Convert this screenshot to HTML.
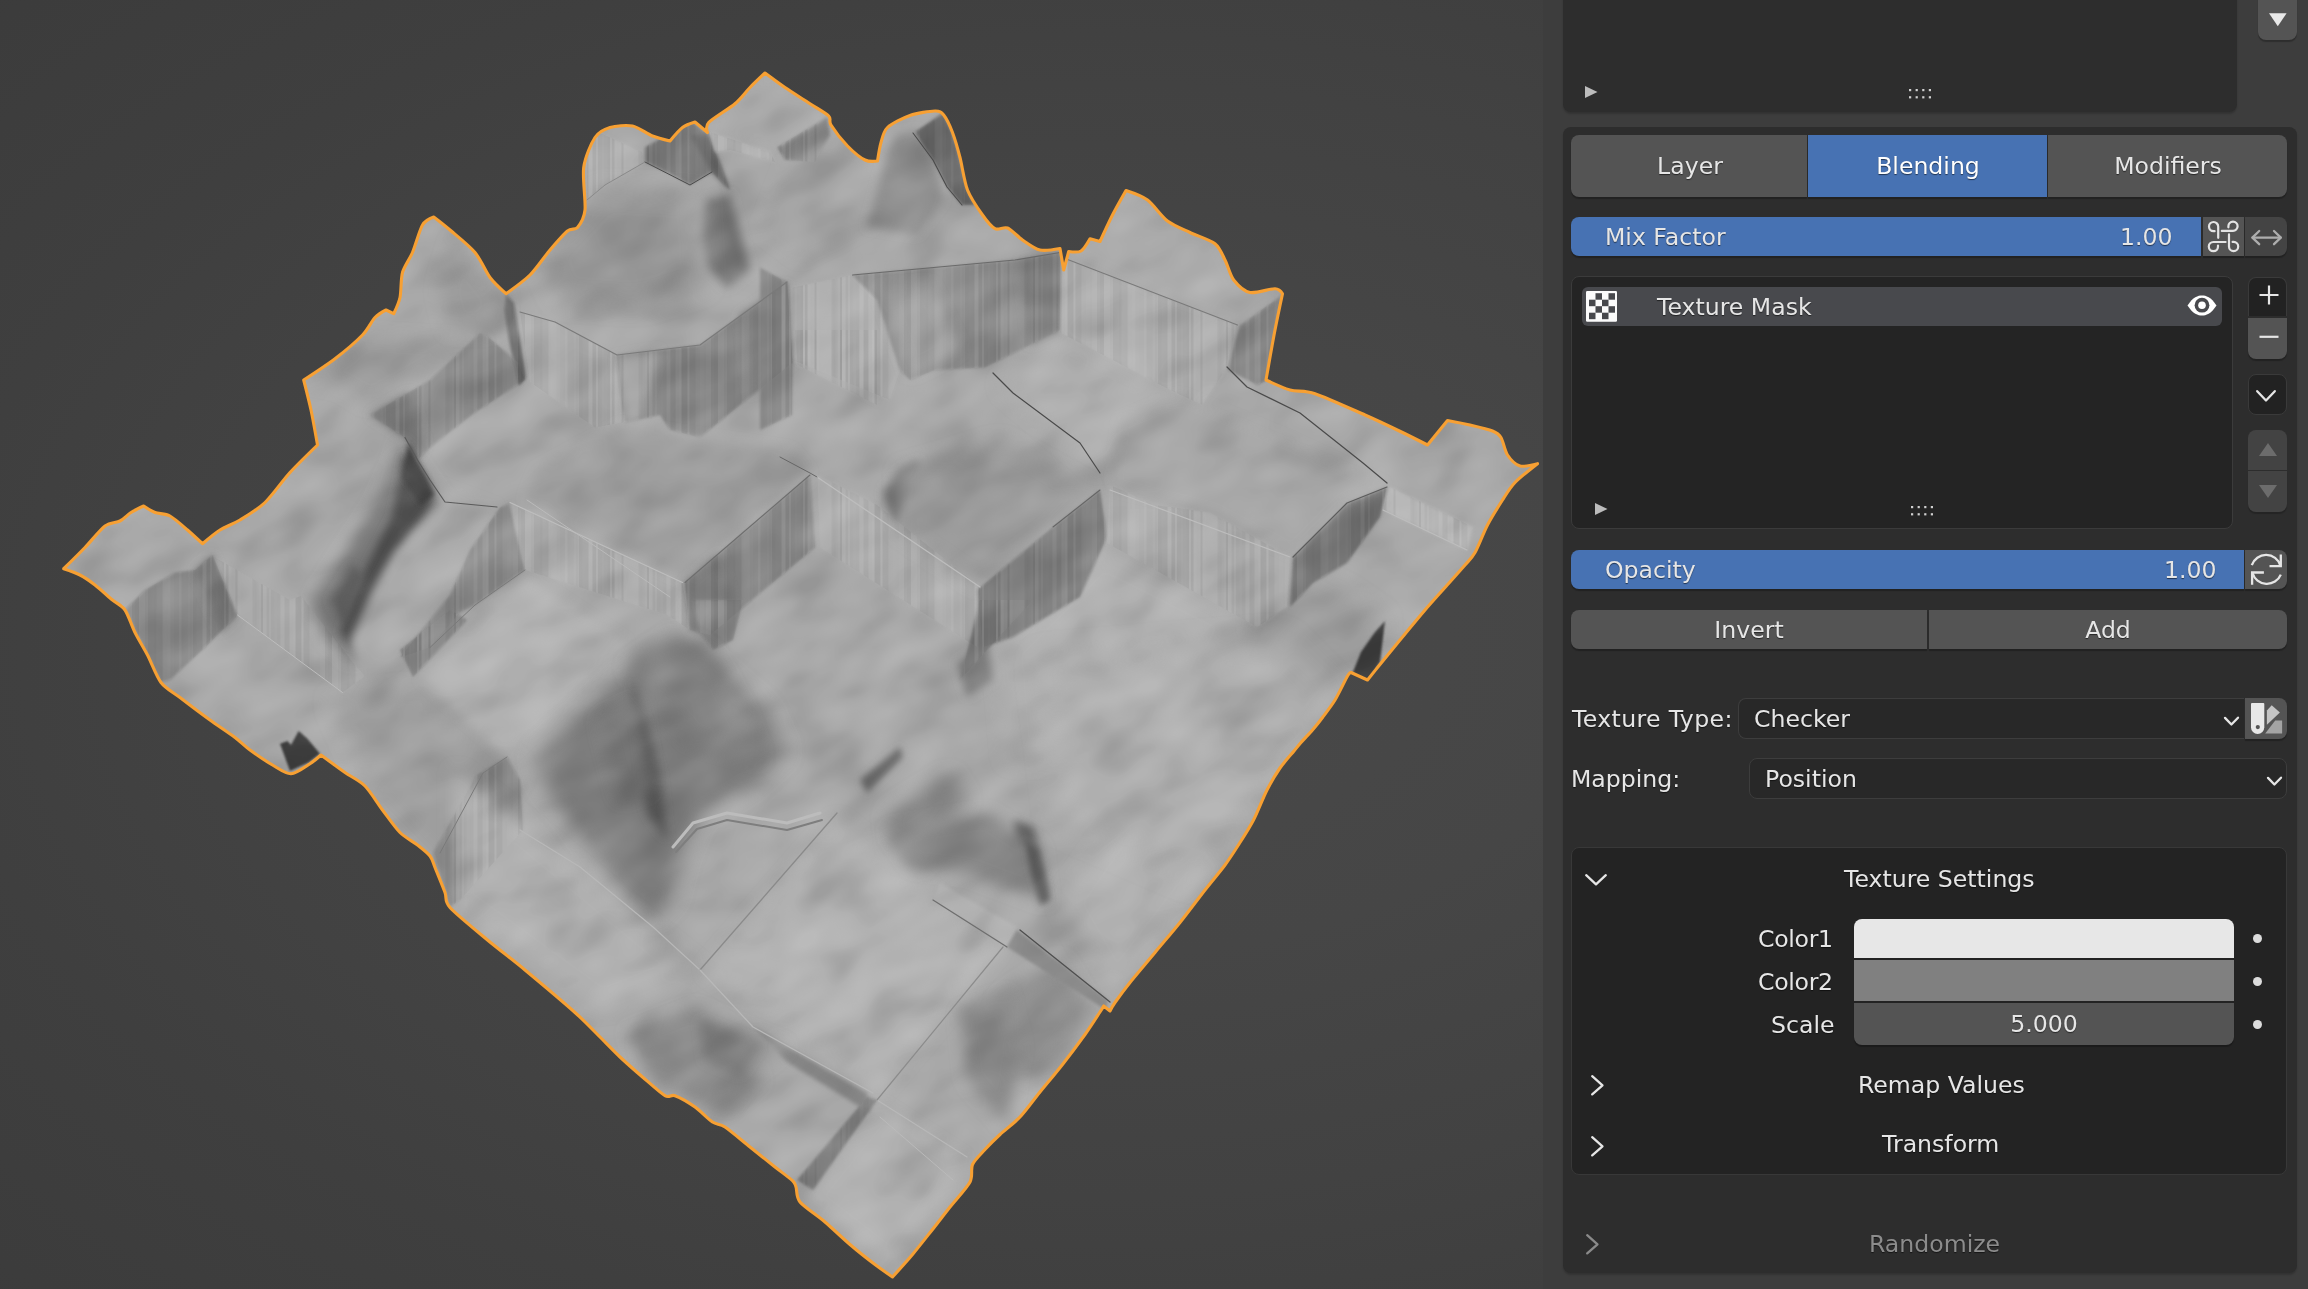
<!DOCTYPE html>
<html lang="en">
<head>
<meta charset="utf-8">
<title>Blender viewport</title>
<style>
html,body{margin:0;padding:0;background:#3d3d3d;}
body{width:2308px;height:1289px;overflow:hidden;position:relative;font-family:"DejaVu Sans","Liberation Sans",sans-serif;font-size:23.6px;color:#e6e6e6;}
#root{position:absolute;left:0;top:0;width:2308px;height:1289px;overflow:hidden;background:#3d3d3d;}
#vp{position:absolute;left:0;top:0;width:1543px;height:1289px;overflow:hidden;background:#3f3f3f;}
#vp svg{position:absolute;left:0;top:0;}
#side{position:absolute;left:1543px;top:0;width:765px;height:1289px;background:#3d3d3d;}
.abs{position:absolute;box-sizing:border-box;}
.t{position:absolute;white-space:nowrap;will-change:transform;line-height:30px;height:30px;text-shadow:0 1px 1px rgba(0,0,0,.55);}
.c{text-align:center;}
.r{text-align:right;}
.box{background:#2d2d2d;border-radius:8px;box-shadow:0 2px 2px rgba(0,0,0,.18);}
.btn{background:#545454;box-shadow:0 2px 1px rgba(0,0,0,.25);}
.blue{background:#4772b3;}
.dark{background:#222222;border:1.5px solid #3a3a3a;}
.field{background:#282828;border:1.5px solid #3d3d3d;border-radius:8px;}
</style>
</head>
<body>
<div id="root">
<div id="vp">
<svg width="1543" height="1289" viewBox="0 0 1543 1289">
<defs>
<radialGradient id="bg" gradientUnits="userSpaceOnUse" cx="0" cy="0" r="1" gradientTransform="translate(1100 640) scale(1730 1050)">
<stop offset="0" stop-color="#494949"/><stop offset="0.30" stop-color="#464646"/><stop offset="0.53" stop-color="#424242"/><stop offset="0.67" stop-color="#3f3f3f"/><stop offset="1" stop-color="#3a3a3a"/></radialGradient>
<pattern id="stripes" width="193" height="8" patternUnits="userSpaceOnUse"><rect x="0.0" y="0" width="3.5" height="8" fill="#000" opacity="0.07"/><rect x="3.5" y="0" width="6.0" height="8" fill="#000" opacity="0.05"/><rect x="9.5" y="0" width="4.0" height="8" fill="#fff" opacity="0.07"/><rect x="13.5" y="0" width="3.5" height="8" fill="#000" opacity="0.06"/><rect x="17.0" y="0" width="2.0" height="8" fill="#fff" opacity="0.03"/><rect x="19.0" y="0" width="4.0" height="8" fill="#000" opacity="0.06"/><rect x="23.0" y="0" width="2.0" height="8" fill="#000" opacity="0.04"/><rect x="25.0" y="0" width="3.5" height="8" fill="#000" opacity="0.05"/><rect x="28.5" y="0" width="2.5" height="8" fill="#000" opacity="0.07"/><rect x="31.0" y="0" width="2.0" height="8" fill="#fff" opacity="0.03"/><rect x="33.0" y="0" width="2.5" height="8" fill="#000" opacity="0.06"/><rect x="35.5" y="0" width="3.0" height="8" fill="#fff" opacity="0.07"/><rect x="38.5" y="0" width="4.0" height="8" fill="#fff" opacity="0.04"/><rect x="42.5" y="0" width="2.0" height="8" fill="#000" opacity="0.05"/><rect x="44.5" y="0" width="3.0" height="8" fill="#fff" opacity="0.06"/><rect x="47.5" y="0" width="6.0" height="8" fill="#fff" opacity="0.04"/><rect x="53.5" y="0" width="6.0" height="8" fill="#fff" opacity="0.04"/><rect x="59.5" y="0" width="2.0" height="8" fill="#000" opacity="0.03"/><rect x="61.5" y="0" width="2.0" height="8" fill="#000" opacity="0.04"/><rect x="63.5" y="0" width="2.0" height="8" fill="#000" opacity="0.02"/><rect x="68.0" y="0" width="2.0" height="8" fill="#000" opacity="0.07"/><rect x="70.0" y="0" width="3.5" height="8" fill="#fff" opacity="0.06"/><rect x="73.5" y="0" width="2.5" height="8" fill="#000" opacity="0.03"/><rect x="76.0" y="0" width="2.0" height="8" fill="#fff" opacity="0.02"/><rect x="78.0" y="0" width="3.5" height="8" fill="#000" opacity="0.03"/><rect x="81.5" y="0" width="2.5" height="8" fill="#000" opacity="0.02"/><rect x="84.0" y="0" width="3.5" height="8" fill="#000" opacity="0.03"/><rect x="87.5" y="0" width="4.0" height="8" fill="#fff" opacity="0.05"/><rect x="91.5" y="0" width="5.0" height="8" fill="#000" opacity="0.04"/><rect x="96.5" y="0" width="3.5" height="8" fill="#fff" opacity="0.05"/><rect x="100.0" y="0" width="2.5" height="8" fill="#fff" opacity="0.08"/><rect x="102.5" y="0" width="6.0" height="8" fill="#000" opacity="0.07"/><rect x="108.5" y="0" width="2.0" height="8" fill="#fff" opacity="0.05"/><rect x="110.5" y="0" width="6.0" height="8" fill="#000" opacity="0.05"/><rect x="118.5" y="0" width="2.5" height="8" fill="#fff" opacity="0.02"/><rect x="121.0" y="0" width="4.0" height="8" fill="#fff" opacity="0.04"/><rect x="125.0" y="0" width="2.0" height="8" fill="#fff" opacity="0.03"/><rect x="127.0" y="0" width="5.0" height="8" fill="#fff" opacity="0.06"/><rect x="132.0" y="0" width="3.0" height="8" fill="#000" opacity="0.03"/><rect x="135.0" y="0" width="4.0" height="8" fill="#000" opacity="0.05"/><rect x="139.0" y="0" width="6.0" height="8" fill="#fff" opacity="0.06"/><rect x="148.0" y="0" width="6.0" height="8" fill="#000" opacity="0.06"/><rect x="154.0" y="0" width="2.5" height="8" fill="#000" opacity="0.07"/><rect x="156.5" y="0" width="2.5" height="8" fill="#000" opacity="0.04"/><rect x="159.0" y="0" width="3.5" height="8" fill="#000" opacity="0.04"/><rect x="162.5" y="0" width="2.0" height="8" fill="#fff" opacity="0.05"/><rect x="164.5" y="0" width="3.0" height="8" fill="#fff" opacity="0.07"/><rect x="167.5" y="0" width="3.0" height="8" fill="#fff" opacity="0.08"/><rect x="170.5" y="0" width="3.5" height="8" fill="#fff" opacity="0.03"/><rect x="179.0" y="0" width="2.5" height="8" fill="#fff" opacity="0.06"/><rect x="181.5" y="0" width="6.0" height="8" fill="#000" opacity="0.02"/><rect x="190.0" y="0" width="2.5" height="8" fill="#000" opacity="0.02"/><rect x="192.5" y="0" width="3.5" height="8" fill="#fff" opacity="0.02"/></pattern>
<filter id="sb" x="-5%" y="-5%" width="110%" height="110%"><feGaussianBlur stdDeviation="0.7 0"/></filter>
<filter id="nzl" x="0" y="0" width="100%" height="100%"><feTurbulence type="fractalNoise" baseFrequency="0.016 0.028" numOctaves="2" seed="5"/><feColorMatrix type="matrix" values="0 0 0 0 1  0 0 0 0 1  0 0 0 0 1  3.0 0 0 0 -1.45"/></filter>
<filter id="nzd" x="0" y="0" width="100%" height="100%"><feTurbulence type="fractalNoise" baseFrequency="0.016 0.028" numOctaves="2" seed="5"/><feColorMatrix type="matrix" values="0 0 0 0 0  0 0 0 0 0  0 0 0 0 0  -3.0 0 0 0 1.45"/></filter>
<clipPath id="tc"><path d="M63.7 568.7 C63.7 568.7 79.1 553.6 85.0 547.5 C90.9 541.4 100.0 529.8 105.0 526.0 C110.0 522.2 116.3 522.9 120.0 521.0 C123.7 519.1 127.6 514.6 131.0 512.5 C134.4 510.4 143.7 506.0 143.7 506.0 C143.7 506.0 151.2 511.1 155.0 512.5 C158.8 513.9 165.4 513.5 170.0 516.0 C174.6 518.5 182.9 526.0 187.5 530.0 C192.1 534.0 202.5 543.7 202.5 543.7 C202.5 543.7 214.6 533.4 220.0 530.0 C225.4 526.6 233.6 523.9 240.0 520.0 C246.4 516.1 257.9 509.3 265.0 502.5 C272.1 495.7 282.5 480.7 290.0 472.5 C297.5 464.3 317.5 445.0 317.5 445.0 C317.5 445.0 313.0 419.3 311.0 410.0 C309.0 400.7 303.7 380.0 303.7 380.0 C303.7 380.0 326.6 365.1 335.0 358.7 C343.4 352.3 356.8 340.9 362.5 335.0 C368.2 329.1 371.6 321.1 375.0 317.5 C378.4 313.9 386.0 310.0 386.0 310.0 C386.0 310.0 393.7 313.7 393.7 313.7 C393.7 313.7 398.7 303.4 400.0 297.5 C401.3 291.6 400.7 278.9 402.5 272.5 C404.3 266.1 409.6 259.3 412.5 252.5 C415.4 245.7 419.5 230.1 422.5 225.0 C425.5 219.9 433.7 217.0 433.7 217.0 C433.7 217.0 444.1 224.9 450.0 230.0 C455.9 235.1 469.3 245.7 475.0 252.5 C480.7 259.3 485.6 271.6 490.0 277.5 C494.4 283.4 506.0 293.7 506.0 293.7 C506.0 293.7 523.7 281.2 530.0 275.0 C536.3 268.8 544.6 256.3 550.0 250.0 C555.4 243.7 563.6 234.2 567.5 231.0 C571.4 227.8 575.0 230.5 577.5 227.5 C580.0 224.5 584.1 218.6 585.0 210.0 C585.9 201.4 582.3 177.9 583.7 167.5 C585.1 157.1 591.2 143.2 595.0 137.5 C598.8 131.8 604.6 129.1 610.0 127.5 C615.4 125.9 626.4 124.8 632.5 126.0 C638.6 127.2 647.1 133.9 652.5 136.0 C657.9 138.1 670.0 141.0 670.0 141.0 C670.0 141.0 678.9 130.2 682.5 127.5 C686.1 124.8 695.0 122.0 695.0 122.0 C695.0 122.0 707.5 132.5 707.5 132.5 C707.5 132.5 704.8 126.6 708.7 122.5 C712.6 118.4 729.1 108.7 735.0 103.7 C740.9 98.7 745.7 91.9 750.0 87.5 C754.3 83.1 765.0 73.0 765.0 73.0 C765.0 73.0 778.6 83.1 785.0 87.5 C791.4 91.9 803.8 99.6 810.0 103.7 C816.2 107.8 825.7 113.0 828.7 116.0 C831.7 119.0 828.3 120.7 831.0 125.0 C833.7 129.3 842.6 141.0 847.5 146.0 C852.4 151.0 860.7 157.9 865.0 160.0 C869.3 162.1 877.5 161.0 877.5 161.0 C877.5 161.0 879.6 147.3 881.0 142.5 C882.4 137.7 883.4 131.4 887.5 127.5 C891.6 123.6 903.2 117.9 910.0 115.5 C916.8 113.1 930.2 111.1 935.0 111.0 C939.8 110.9 941.2 111.9 943.7 115.0 C946.2 118.1 950.2 126.4 952.5 132.5 C954.8 138.6 957.9 149.3 960.0 157.5 C962.1 165.7 964.3 181.8 967.5 190.0 C970.7 198.2 978.6 209.5 982.5 215.0 C986.4 220.5 991.4 226.8 995.0 228.7 C998.6 230.6 1003.6 226.4 1007.5 228.0 C1011.4 229.6 1017.9 236.9 1022.5 240.0 C1027.1 243.1 1034.6 248.8 1040.0 250.0 C1045.4 251.2 1060.0 248.5 1060.0 248.5 C1060.0 248.5 1063.7 270.0 1063.7 270.0 C1063.7 270.0 1068.7 251.5 1068.7 251.5 C1068.7 251.5 1078.0 252.8 1081.0 251.0 C1084.0 249.2 1090.0 238.7 1090.0 238.7 C1090.0 238.7 1100.0 241.5 1100.0 241.5 C1100.0 241.5 1108.8 222.3 1112.5 215.0 C1116.2 207.7 1126.0 190.5 1126.0 190.5 C1126.0 190.5 1141.6 195.6 1147.5 200.0 C1153.4 204.4 1161.4 216.4 1167.5 221.0 C1173.6 225.6 1183.2 229.3 1190.0 232.5 C1196.8 235.7 1210.0 239.8 1215.0 243.7 C1220.0 247.6 1222.3 254.8 1225.0 260.0 C1227.7 265.2 1230.1 275.4 1233.7 280.0 C1237.3 284.6 1244.1 291.3 1250.0 292.5 C1255.9 293.7 1270.4 288.5 1275.0 288.7 C1279.6 288.9 1282.5 293.7 1282.5 293.7 C1282.5 293.7 1277.4 317.7 1275.0 330.0 C1272.6 342.3 1266.0 380.0 1266.0 380.0 C1266.0 380.0 1283.0 388.0 1290.0 390.0 C1297.0 392.0 1304.3 390.1 1315.0 393.7 C1325.7 397.3 1352.5 409.5 1365.0 415.0 C1377.5 420.5 1393.6 428.2 1402.5 432.5 C1411.4 436.8 1427.5 445.0 1427.5 445.0 C1427.5 445.0 1447.5 420.5 1447.5 420.5 C1447.5 420.5 1463.6 423.5 1470.0 425.0 C1476.4 426.5 1488.1 429.2 1492.5 431.0 C1496.9 432.8 1498.9 434.1 1501.0 437.5 C1503.1 440.9 1504.8 450.9 1507.5 455.0 C1510.2 459.1 1515.7 464.8 1520.0 466.0 C1524.3 467.2 1537.5 463.7 1537.5 463.7 C1537.5 463.7 1520.0 477.3 1515.0 482.5 C1510.0 487.7 1506.4 493.9 1502.5 500.0 C1498.6 506.1 1491.4 517.5 1487.5 525.0 C1483.6 532.5 1478.2 546.8 1475.0 552.5 C1471.8 558.2 1469.3 560.0 1465.0 565.0 C1460.7 570.0 1450.7 581.1 1445.0 587.5 C1439.3 593.9 1431.4 602.5 1425.0 610.0 C1418.6 617.5 1406.8 631.8 1400.0 640.0 C1393.2 648.2 1382.1 661.8 1377.5 667.5 C1372.9 673.2 1367.5 680.0 1367.5 680.0 C1367.5 680.0 1351.0 672.5 1351.0 672.5 C1351.0 672.5 1349.8 672.1 1347.5 676.0 C1345.2 679.9 1338.6 694.1 1335.0 700.0 C1331.4 705.9 1325.7 713.2 1322.5 717.5 C1319.3 721.8 1315.6 726.4 1312.5 730.0 C1309.4 733.6 1303.6 739.5 1301.0 742.5 C1298.4 745.5 1297.0 747.4 1294.0 751.0 C1291.0 754.6 1283.9 762.4 1280.0 768.0 C1276.1 773.6 1270.8 782.6 1267.0 790.0 C1263.2 797.4 1257.4 812.5 1253.5 820.0 C1249.6 827.5 1244.1 836.1 1240.0 842.5 C1235.9 848.9 1230.0 858.2 1225.0 865.0 C1220.0 871.8 1211.4 881.8 1205.0 890.0 C1198.6 898.2 1187.1 913.6 1180.0 922.5 C1172.9 931.4 1162.1 943.9 1155.0 952.5 C1147.9 961.1 1135.7 975.4 1130.0 982.5 C1124.3 989.6 1117.9 998.4 1115.0 1002.5 C1112.1 1006.6 1110.0 1011.0 1110.0 1011.0 C1110.0 1011.0 1103.7 1006.0 1103.7 1006.0 C1103.7 1006.0 1102.7 1007.9 1100.0 1012.0 C1097.3 1016.1 1090.4 1027.0 1085.0 1034.5 C1079.6 1042.0 1068.9 1056.3 1062.5 1064.5 C1056.1 1072.7 1046.1 1084.5 1040.0 1092.0 C1033.9 1099.5 1025.7 1110.9 1020.0 1117.0 C1014.3 1123.1 1005.0 1129.9 1000.0 1134.5 C995.0 1139.1 988.9 1145.2 985.0 1149.5 C981.1 1153.8 974.6 1159.9 972.5 1164.5 C970.4 1169.1 973.2 1175.9 970.0 1182.0 C966.8 1188.1 955.4 1200.2 950.0 1207.0 C944.6 1213.8 937.9 1222.7 932.5 1229.5 C927.1 1236.3 918.2 1247.7 912.5 1254.5 C906.8 1261.3 892.5 1277.0 892.5 1277.0 C892.5 1277.0 881.1 1269.1 875.0 1264.5 C868.9 1259.9 857.1 1250.6 850.0 1244.5 C842.9 1238.4 832.1 1228.1 825.0 1222.0 C817.9 1215.9 804.1 1207.0 800.0 1202.0 C795.9 1197.0 797.1 1190.0 796.0 1187.0 C794.9 1184.0 795.5 1183.6 792.5 1180.7 C789.5 1177.8 781.1 1171.8 775.0 1167.0 C768.9 1162.2 757.1 1152.7 750.0 1147.0 C742.9 1141.3 730.4 1130.6 725.0 1127.0 C719.6 1123.4 716.8 1124.9 712.5 1122.0 C708.2 1119.1 700.4 1110.8 695.0 1107.0 C689.6 1103.2 679.3 1097.3 675.0 1095.7 C670.7 1094.1 669.6 1098.4 665.0 1095.7 C660.4 1093.0 648.9 1082.5 642.5 1077.0 C636.1 1071.5 626.1 1062.7 620.0 1057.0 C613.9 1051.3 606.4 1043.4 600.0 1037.0 C593.6 1030.6 585.7 1022.1 575.0 1012.5 C564.3 1002.9 537.5 980.4 525.0 970.0 C512.5 959.6 498.2 948.9 487.5 940.0 C476.8 931.1 456.1 914.3 450.0 907.5 C443.9 900.7 447.1 898.2 445.0 892.5 C442.9 886.8 437.1 872.7 435.0 867.5 C432.9 862.3 432.5 859.2 430.0 856.0 C427.5 852.8 421.8 848.4 417.5 845.0 C413.2 841.6 405.0 837.5 400.0 832.5 C395.0 827.5 387.5 816.6 382.5 810.0 C377.5 803.4 370.4 791.4 365.0 786.0 C359.6 780.6 351.3 776.9 345.0 772.5 C338.7 768.1 321.0 755.0 321.0 755.0 C321.0 755.0 314.3 761.0 310.0 763.7 C305.7 766.4 296.4 773.5 291.0 773.7 C285.6 773.9 278.4 768.4 272.5 765.0 C266.6 761.6 255.4 753.9 250.0 750.0 C244.6 746.1 240.7 741.8 235.0 737.5 C229.3 733.2 217.9 725.7 210.0 720.0 C202.1 714.3 187.0 702.9 180.0 697.5 C173.0 692.1 165.6 688.6 161.0 682.5 C156.4 676.4 151.2 662.1 147.5 655.0 C143.8 647.9 138.2 638.9 135.0 632.5 C131.8 626.1 128.2 614.6 125.0 610.0 C121.8 605.4 116.8 603.6 112.5 600.0 C108.2 596.4 99.6 588.6 95.0 585.0 C90.4 581.4 84.5 577.3 80.0 575.0 C75.5 572.7 63.7 568.7 63.7 568.7 Z"/></clipPath>
<filter id="b1" x="-50%" y="-50%" width="200%" height="200%"><feGaussianBlur stdDeviation="1"/></filter>
<filter id="b1_5" x="-50%" y="-50%" width="200%" height="200%"><feGaussianBlur stdDeviation="1.5"/></filter>
<filter id="b2" x="-50%" y="-50%" width="200%" height="200%"><feGaussianBlur stdDeviation="2"/></filter>
<filter id="b2_5" x="-50%" y="-50%" width="200%" height="200%"><feGaussianBlur stdDeviation="2.5"/></filter>
<filter id="b3" x="-50%" y="-50%" width="200%" height="200%"><feGaussianBlur stdDeviation="3"/></filter>
<filter id="b4" x="-50%" y="-50%" width="200%" height="200%"><feGaussianBlur stdDeviation="4"/></filter>
<filter id="b5" x="-50%" y="-50%" width="200%" height="200%"><feGaussianBlur stdDeviation="5"/></filter>
<filter id="b6" x="-50%" y="-50%" width="200%" height="200%"><feGaussianBlur stdDeviation="6"/></filter>
<filter id="b7" x="-50%" y="-50%" width="200%" height="200%"><feGaussianBlur stdDeviation="7"/></filter>
<filter id="b8" x="-50%" y="-50%" width="200%" height="200%"><feGaussianBlur stdDeviation="8"/></filter>
<filter id="b9" x="-50%" y="-50%" width="200%" height="200%"><feGaussianBlur stdDeviation="9"/></filter>
<filter id="b10" x="-50%" y="-50%" width="200%" height="200%"><feGaussianBlur stdDeviation="10"/></filter>
<filter id="b12" x="-50%" y="-50%" width="200%" height="200%"><feGaussianBlur stdDeviation="12"/></filter>
</defs>
<rect x="0" y="0" width="2308" height="1289" fill="url(#bg)"/>
<path d="M63.7 568.7 C63.7 568.7 79.1 553.6 85.0 547.5 C90.9 541.4 100.0 529.8 105.0 526.0 C110.0 522.2 116.3 522.9 120.0 521.0 C123.7 519.1 127.6 514.6 131.0 512.5 C134.4 510.4 143.7 506.0 143.7 506.0 C143.7 506.0 151.2 511.1 155.0 512.5 C158.8 513.9 165.4 513.5 170.0 516.0 C174.6 518.5 182.9 526.0 187.5 530.0 C192.1 534.0 202.5 543.7 202.5 543.7 C202.5 543.7 214.6 533.4 220.0 530.0 C225.4 526.6 233.6 523.9 240.0 520.0 C246.4 516.1 257.9 509.3 265.0 502.5 C272.1 495.7 282.5 480.7 290.0 472.5 C297.5 464.3 317.5 445.0 317.5 445.0 C317.5 445.0 313.0 419.3 311.0 410.0 C309.0 400.7 303.7 380.0 303.7 380.0 C303.7 380.0 326.6 365.1 335.0 358.7 C343.4 352.3 356.8 340.9 362.5 335.0 C368.2 329.1 371.6 321.1 375.0 317.5 C378.4 313.9 386.0 310.0 386.0 310.0 C386.0 310.0 393.7 313.7 393.7 313.7 C393.7 313.7 398.7 303.4 400.0 297.5 C401.3 291.6 400.7 278.9 402.5 272.5 C404.3 266.1 409.6 259.3 412.5 252.5 C415.4 245.7 419.5 230.1 422.5 225.0 C425.5 219.9 433.7 217.0 433.7 217.0 C433.7 217.0 444.1 224.9 450.0 230.0 C455.9 235.1 469.3 245.7 475.0 252.5 C480.7 259.3 485.6 271.6 490.0 277.5 C494.4 283.4 506.0 293.7 506.0 293.7 C506.0 293.7 523.7 281.2 530.0 275.0 C536.3 268.8 544.6 256.3 550.0 250.0 C555.4 243.7 563.6 234.2 567.5 231.0 C571.4 227.8 575.0 230.5 577.5 227.5 C580.0 224.5 584.1 218.6 585.0 210.0 C585.9 201.4 582.3 177.9 583.7 167.5 C585.1 157.1 591.2 143.2 595.0 137.5 C598.8 131.8 604.6 129.1 610.0 127.5 C615.4 125.9 626.4 124.8 632.5 126.0 C638.6 127.2 647.1 133.9 652.5 136.0 C657.9 138.1 670.0 141.0 670.0 141.0 C670.0 141.0 678.9 130.2 682.5 127.5 C686.1 124.8 695.0 122.0 695.0 122.0 C695.0 122.0 707.5 132.5 707.5 132.5 C707.5 132.5 704.8 126.6 708.7 122.5 C712.6 118.4 729.1 108.7 735.0 103.7 C740.9 98.7 745.7 91.9 750.0 87.5 C754.3 83.1 765.0 73.0 765.0 73.0 C765.0 73.0 778.6 83.1 785.0 87.5 C791.4 91.9 803.8 99.6 810.0 103.7 C816.2 107.8 825.7 113.0 828.7 116.0 C831.7 119.0 828.3 120.7 831.0 125.0 C833.7 129.3 842.6 141.0 847.5 146.0 C852.4 151.0 860.7 157.9 865.0 160.0 C869.3 162.1 877.5 161.0 877.5 161.0 C877.5 161.0 879.6 147.3 881.0 142.5 C882.4 137.7 883.4 131.4 887.5 127.5 C891.6 123.6 903.2 117.9 910.0 115.5 C916.8 113.1 930.2 111.1 935.0 111.0 C939.8 110.9 941.2 111.9 943.7 115.0 C946.2 118.1 950.2 126.4 952.5 132.5 C954.8 138.6 957.9 149.3 960.0 157.5 C962.1 165.7 964.3 181.8 967.5 190.0 C970.7 198.2 978.6 209.5 982.5 215.0 C986.4 220.5 991.4 226.8 995.0 228.7 C998.6 230.6 1003.6 226.4 1007.5 228.0 C1011.4 229.6 1017.9 236.9 1022.5 240.0 C1027.1 243.1 1034.6 248.8 1040.0 250.0 C1045.4 251.2 1060.0 248.5 1060.0 248.5 C1060.0 248.5 1063.7 270.0 1063.7 270.0 C1063.7 270.0 1068.7 251.5 1068.7 251.5 C1068.7 251.5 1078.0 252.8 1081.0 251.0 C1084.0 249.2 1090.0 238.7 1090.0 238.7 C1090.0 238.7 1100.0 241.5 1100.0 241.5 C1100.0 241.5 1108.8 222.3 1112.5 215.0 C1116.2 207.7 1126.0 190.5 1126.0 190.5 C1126.0 190.5 1141.6 195.6 1147.5 200.0 C1153.4 204.4 1161.4 216.4 1167.5 221.0 C1173.6 225.6 1183.2 229.3 1190.0 232.5 C1196.8 235.7 1210.0 239.8 1215.0 243.7 C1220.0 247.6 1222.3 254.8 1225.0 260.0 C1227.7 265.2 1230.1 275.4 1233.7 280.0 C1237.3 284.6 1244.1 291.3 1250.0 292.5 C1255.9 293.7 1270.4 288.5 1275.0 288.7 C1279.6 288.9 1282.5 293.7 1282.5 293.7 C1282.5 293.7 1277.4 317.7 1275.0 330.0 C1272.6 342.3 1266.0 380.0 1266.0 380.0 C1266.0 380.0 1283.0 388.0 1290.0 390.0 C1297.0 392.0 1304.3 390.1 1315.0 393.7 C1325.7 397.3 1352.5 409.5 1365.0 415.0 C1377.5 420.5 1393.6 428.2 1402.5 432.5 C1411.4 436.8 1427.5 445.0 1427.5 445.0 C1427.5 445.0 1447.5 420.5 1447.5 420.5 C1447.5 420.5 1463.6 423.5 1470.0 425.0 C1476.4 426.5 1488.1 429.2 1492.5 431.0 C1496.9 432.8 1498.9 434.1 1501.0 437.5 C1503.1 440.9 1504.8 450.9 1507.5 455.0 C1510.2 459.1 1515.7 464.8 1520.0 466.0 C1524.3 467.2 1537.5 463.7 1537.5 463.7 C1537.5 463.7 1520.0 477.3 1515.0 482.5 C1510.0 487.7 1506.4 493.9 1502.5 500.0 C1498.6 506.1 1491.4 517.5 1487.5 525.0 C1483.6 532.5 1478.2 546.8 1475.0 552.5 C1471.8 558.2 1469.3 560.0 1465.0 565.0 C1460.7 570.0 1450.7 581.1 1445.0 587.5 C1439.3 593.9 1431.4 602.5 1425.0 610.0 C1418.6 617.5 1406.8 631.8 1400.0 640.0 C1393.2 648.2 1382.1 661.8 1377.5 667.5 C1372.9 673.2 1367.5 680.0 1367.5 680.0 C1367.5 680.0 1351.0 672.5 1351.0 672.5 C1351.0 672.5 1349.8 672.1 1347.5 676.0 C1345.2 679.9 1338.6 694.1 1335.0 700.0 C1331.4 705.9 1325.7 713.2 1322.5 717.5 C1319.3 721.8 1315.6 726.4 1312.5 730.0 C1309.4 733.6 1303.6 739.5 1301.0 742.5 C1298.4 745.5 1297.0 747.4 1294.0 751.0 C1291.0 754.6 1283.9 762.4 1280.0 768.0 C1276.1 773.6 1270.8 782.6 1267.0 790.0 C1263.2 797.4 1257.4 812.5 1253.5 820.0 C1249.6 827.5 1244.1 836.1 1240.0 842.5 C1235.9 848.9 1230.0 858.2 1225.0 865.0 C1220.0 871.8 1211.4 881.8 1205.0 890.0 C1198.6 898.2 1187.1 913.6 1180.0 922.5 C1172.9 931.4 1162.1 943.9 1155.0 952.5 C1147.9 961.1 1135.7 975.4 1130.0 982.5 C1124.3 989.6 1117.9 998.4 1115.0 1002.5 C1112.1 1006.6 1110.0 1011.0 1110.0 1011.0 C1110.0 1011.0 1103.7 1006.0 1103.7 1006.0 C1103.7 1006.0 1102.7 1007.9 1100.0 1012.0 C1097.3 1016.1 1090.4 1027.0 1085.0 1034.5 C1079.6 1042.0 1068.9 1056.3 1062.5 1064.5 C1056.1 1072.7 1046.1 1084.5 1040.0 1092.0 C1033.9 1099.5 1025.7 1110.9 1020.0 1117.0 C1014.3 1123.1 1005.0 1129.9 1000.0 1134.5 C995.0 1139.1 988.9 1145.2 985.0 1149.5 C981.1 1153.8 974.6 1159.9 972.5 1164.5 C970.4 1169.1 973.2 1175.9 970.0 1182.0 C966.8 1188.1 955.4 1200.2 950.0 1207.0 C944.6 1213.8 937.9 1222.7 932.5 1229.5 C927.1 1236.3 918.2 1247.7 912.5 1254.5 C906.8 1261.3 892.5 1277.0 892.5 1277.0 C892.5 1277.0 881.1 1269.1 875.0 1264.5 C868.9 1259.9 857.1 1250.6 850.0 1244.5 C842.9 1238.4 832.1 1228.1 825.0 1222.0 C817.9 1215.9 804.1 1207.0 800.0 1202.0 C795.9 1197.0 797.1 1190.0 796.0 1187.0 C794.9 1184.0 795.5 1183.6 792.5 1180.7 C789.5 1177.8 781.1 1171.8 775.0 1167.0 C768.9 1162.2 757.1 1152.7 750.0 1147.0 C742.9 1141.3 730.4 1130.6 725.0 1127.0 C719.6 1123.4 716.8 1124.9 712.5 1122.0 C708.2 1119.1 700.4 1110.8 695.0 1107.0 C689.6 1103.2 679.3 1097.3 675.0 1095.7 C670.7 1094.1 669.6 1098.4 665.0 1095.7 C660.4 1093.0 648.9 1082.5 642.5 1077.0 C636.1 1071.5 626.1 1062.7 620.0 1057.0 C613.9 1051.3 606.4 1043.4 600.0 1037.0 C593.6 1030.6 585.7 1022.1 575.0 1012.5 C564.3 1002.9 537.5 980.4 525.0 970.0 C512.5 959.6 498.2 948.9 487.5 940.0 C476.8 931.1 456.1 914.3 450.0 907.5 C443.9 900.7 447.1 898.2 445.0 892.5 C442.9 886.8 437.1 872.7 435.0 867.5 C432.9 862.3 432.5 859.2 430.0 856.0 C427.5 852.8 421.8 848.4 417.5 845.0 C413.2 841.6 405.0 837.5 400.0 832.5 C395.0 827.5 387.5 816.6 382.5 810.0 C377.5 803.4 370.4 791.4 365.0 786.0 C359.6 780.6 351.3 776.9 345.0 772.5 C338.7 768.1 321.0 755.0 321.0 755.0 C321.0 755.0 314.3 761.0 310.0 763.7 C305.7 766.4 296.4 773.5 291.0 773.7 C285.6 773.9 278.4 768.4 272.5 765.0 C266.6 761.6 255.4 753.9 250.0 750.0 C244.6 746.1 240.7 741.8 235.0 737.5 C229.3 733.2 217.9 725.7 210.0 720.0 C202.1 714.3 187.0 702.9 180.0 697.5 C173.0 692.1 165.6 688.6 161.0 682.5 C156.4 676.4 151.2 662.1 147.5 655.0 C143.8 647.9 138.2 638.9 135.0 632.5 C131.8 626.1 128.2 614.6 125.0 610.0 C121.8 605.4 116.8 603.6 112.5 600.0 C108.2 596.4 99.6 588.6 95.0 585.0 C90.4 581.4 84.5 577.3 80.0 575.0 C75.5 572.7 63.7 568.7 63.7 568.7 Z" fill="#a8a8a8"/>
<g clip-path="url(#tc)">
<path d="M1282.0 580.0 L1300.0 570.0 L1350.0 595.0 L1385.0 620.0 L1375.0 660.0 L1350.0 672.0 L1300.0 762.0 L1175.0 762.0 L1220.0 665.0 L1250.0 615.0 Z" fill="#9d9d9d" filter="url(#b9)"/>
<path d="M1000.0 645.0 L1100.0 545.0 L1245.0 618.0 L1175.0 755.0 L1010.0 760.0 Z" fill="#b0b0b0" filter="url(#b9)"/>
<path d="M1060.0 902.0 L1135.0 795.0 L1235.0 842.0 L1115.0 998.0 Z" fill="#b0b0b0" filter="url(#b8)"/>
<path d="M465.0 290.0 L505.0 295.0 L510.0 330.0 L480.0 340.0 Z" fill="#909090" filter="url(#b6)"/>
<path d="M305.0 380.0 L362.0 335.0 L440.0 340.0 L485.0 342.0 L370.0 405.0 L340.0 387.0 Z" fill="#9c9c9c" filter="url(#b7)"/>
<path d="M330.0 700.0 L420.0 690.0 L520.0 770.0 L450.0 870.0 L370.0 790.0 Z" fill="#9e9e9e" filter="url(#b9)"/>
<path d="M1130.0 430.0 L1200.0 412.0 L1380.0 488.0 L1300.0 500.0 Z" fill="#b3b3b3" filter="url(#b5)"/>
<path d="M1125.0 452.0 L1300.0 520.0 L1290.0 545.0 L1115.0 480.0 Z" fill="#999999" filter="url(#b6)"/>
<path d="M1000.0 385.0 L1060.0 340.0 L1160.0 392.0 L1100.0 470.0 Z" fill="#aeaeae" filter="url(#b8)"/>
<path d="M370.0 415.0 L430.0 380.0 L480.0 333.0 L487.0 336.0 L517.5 362.0 L525.0 380.0 L475.0 412.5 L430.0 447.5 L417.5 460.0 L405.0 437.5 Z" fill="#8a8a8a" filter="url(#b1_5)"/>
<path d="M370.0 415.0 L410.0 392.0 L425.0 445.0 L417.5 460.0 L405.0 437.5 Z" fill="#7c7c7c" filter="url(#b4)"/>
<path d="M506.0 294.0 L514.0 303.0 L526.0 378.0 L519.0 386.0 L509.0 340.0 L504.0 310.0 Z" fill="#6c6c6c" filter="url(#b1_5)"/>
<path d="M455.0 240.0 L490.0 280.0 L505.0 300.0 L490.0 330.0 L450.0 330.0 L440.0 290.0 Z" fill="#9b9b9b" filter="url(#b8)"/>
<path d="M587.0 140.0 L600.0 133.0 L642.0 152.0 L645.0 162.0 L605.0 185.0 L587.0 200.0 Z" fill="#aeaeae" filter="url(#b1_5)"/>
<path d="M645.0 147.0 L692.0 122.0 L708.0 134.0 L730.0 190.0 L712.0 172.0 L690.0 185.0 L672.0 175.0 L645.0 162.0 Z" fill="#7a7a7a" filter="url(#b1_5)"/>
<path d="M690.0 135.0 L708.0 134.0 L730.0 190.0 L712.0 172.0 Z" fill="#666666" filter="url(#b2_5)"/>
<path d="M705.0 200.0 L730.0 195.0 L750.0 270.0 L727.0 288.0 L705.0 265.0 L700.0 230.0 Z" fill="#707070" filter="url(#b5)"/>
<path d="M600.0 190.0 L700.0 195.0 L705.0 285.0 L640.0 305.0 L560.0 300.0 L540.0 255.0 Z" fill="#949494" filter="url(#b10)"/>
<path d="M520.0 312.0 L555.0 322.0 L617.0 355.0 L625.0 422.0 L595.0 427.5 L530.0 382.0 Z" fill="#aaaaaa" filter="url(#b1_5)"/>
<path d="M615.0 355.0 L700.0 345.0 L787.0 282.0 L792.5 362.5 L700.0 437.5 L670.0 430.0 L660.0 415.0 L625.0 422.5 Z" fill="#868686" filter="url(#b1_5)"/>
<path d="M617.0 357.0 L660.0 350.0 L640.0 420.0 L625.0 422.0 Z" fill="#a0a0a0" filter="url(#b4)"/>
<path d="M740.0 315.0 L787.0 284.0 L792.0 362.0 L750.0 395.0 Z" fill="#7c7c7c" filter="url(#b4)"/>
<path d="M710.0 132.0 L770.0 152.0 L775.0 162.0 L730.0 150.0 L715.0 152.0 Z" fill="#b0b0b0" filter="url(#b1_5)"/>
<path d="M777.0 147.0 L827.0 117.0 L830.0 135.0 L815.0 162.0 L785.0 160.0 Z" fill="#7a7a7a" filter="url(#b1_5)"/>
<path d="M735.0 100.0 L765.0 78.0 L826.0 116.0 L777.0 147.0 L712.0 128.0 Z" fill="#a9a9a9" filter="url(#b3)"/>
<path d="M785.0 165.0 L830.0 140.0 L865.0 162.0 L880.0 165.0 L870.0 225.0 L800.0 260.0 L760.0 230.0 Z" fill="#a5a5a5" filter="url(#b6)"/>
<path d="M867.0 227.0 L885.0 160.0 L895.0 135.0 L917.0 130.0 L935.0 160.0 L943.0 200.0 L917.0 235.0 Z" fill="#8c8c8c" filter="url(#b4)"/>
<path d="M915.0 132.0 L943.0 113.0 L952.0 133.0 L960.0 160.0 L968.0 192.0 L975.0 205.0 L962.0 205.0 L947.0 187.0 L933.0 160.0 Z" fill="#6a6a6a" filter="url(#b1_5)"/>
<path d="M795.0 330.0 L877.0 330.0 L877.0 405.0 L797.5 365.0 Z" fill="#aeaeae" filter="url(#b1_5)"/>
<path d="M792.5 287.5 L852.5 275.0 L877.5 300.0 L900.0 370.0 L890.0 400.0 L792.5 360.0 Z" fill="#aeaeae" filter="url(#b1_5)"/>
<path d="M852.5 275.0 L1015.0 260.0 L1060.0 252.5 L1060.0 330.0 L985.0 367.5 L935.0 370.0 L910.0 380.0 L900.0 370.0 L877.5 300.0 Z" fill="#8e8e8e" filter="url(#b1_5)"/>
<path d="M1020.0 262.0 L1060.0 254.0 L1060.0 330.0 L1030.0 345.0 Z" fill="#7e7e7e" filter="url(#b4)"/>
<path d="M880.0 290.0 L930.0 285.0 L960.0 350.0 L910.0 375.0 Z" fill="#a0a0a0" filter="url(#b6)"/>
<path d="M1062.5 257.5 L1237.5 325.0 L1225.0 370.0 L1202.5 405.0 L1170.0 390.0 L1060.0 332.5 Z" fill="#afafaf" filter="url(#b1_5)"/>
<path d="M1240.0 325.0 L1282.5 295.0 L1267.5 380.0 L1257.5 385.0 L1227.5 370.0 Z" fill="#858585" filter="url(#b1_5)"/>
<path d="M760.0 267.5 L787.5 282.5 L792.5 360.0 L792.0 415.0 L760.0 430.0 Z" fill="#888888" filter="url(#b1_5)"/>
<path d="M1070.0 250.0 L1112.0 215.0 L1127.0 192.0 L1215.0 244.0 L1233.0 280.0 L1280.0 292.0 L1240.0 324.0 L1150.0 290.0 Z" fill="#aaaaaa" filter="url(#b3)"/>
<path d="M125.0 610.0 L145.0 590.0 L175.0 572.5 L195.0 570.0 L212.5 555.0 L237.5 615.0 L205.0 647.5 L170.0 680.0 L161.0 682.5 L147.5 655.0 Z" fill="#868686" filter="url(#b1_5)"/>
<path d="M195.0 570.0 L212.5 555.0 L237.5 615.0 L220.0 632.0 Z" fill="#747474" filter="url(#b4)"/>
<path d="M215.0 557.5 L290.0 600.0 L301.0 596.0 L355.0 665.0 L365.0 676.0 L342.5 692.5 L237.5 615.0 Z" fill="#a9a9a9" filter="url(#b1_5)"/>
<path d="M400.0 440.0 L430.0 482.5 L445.0 502.5 L415.0 540.0 L390.0 590.0 L372.5 640.0 L352.5 662.0 L327.5 640.0 L312.5 600.0 L340.0 557.5 L372.5 507.5 L392.5 465.0 Z" fill="#7c7c7c" filter="url(#b7)"/>
<path d="M404.0 452.0 L425.0 485.0 L432.0 503.0 L409.0 535.0 L387.0 580.0 L370.0 628.0 L352.0 647.5 L340.0 632.0 L350.0 598.0 L370.0 560.0 L392.0 517.0 L400.0 477.5 Z" fill="#4e4e4e" filter="url(#b4)"/>
<path d="M408.0 442.0 L420.0 465.0 L436.0 494.0 L420.0 505.0 L402.0 478.0 Z" fill="#3e3e3e" filter="url(#b2_5)"/>
<path d="M330.0 600.0 L352.0 565.0 L365.0 575.0 L345.0 625.0 Z" fill="#5e5e5e" filter="url(#b4)"/>
<path d="M430.0 482.5 L497.5 507.5 L465.0 552.5 L450.0 595.0 L400.0 657.5 L365.0 680.0 L350.0 640.0 L372.5 590.0 L395.0 550.0 L445.0 502.5 Z" fill="#aaaaaa" filter="url(#b5)"/>
<path d="M470.0 550.0 L500.0 507.5 L510.0 503.0 L525.0 570.0 L475.0 605.0 L460.0 612.0 L430.0 647.5 L400.0 657.5 L450.0 595.0 Z" fill="#8d8d8d" filter="url(#b1_5)"/>
<path d="M510.0 502.5 L682.5 582.5 L690.0 630.0 L667.5 615.0 L525.0 570.0 Z" fill="#acacac" filter="url(#b1_5)"/>
<path d="M420.0 677.0 L527.0 577.0 L627.0 643.0 L507.0 757.0 Z" fill="#b1b1b1" filter="url(#b5)"/>
<path d="M537.0 470.0 L620.0 425.0 L790.0 450.0 L810.0 473.0 L683.0 580.0 L525.0 500.0 Z" fill="#9e9e9e" filter="url(#b5)"/>
<path d="M685.0 582.5 L810.0 475.0 L815.0 547.5 L710.0 635.0 L690.0 630.0 Z" fill="#878787" filter="url(#b1_5)"/>
<path d="M685.0 582.5 L720.0 553.0 L735.0 612.0 L710.0 635.0 L690.0 630.0 Z" fill="#7a7a7a" filter="url(#b4)"/>
<path d="M817.5 475.0 L877.0 505.0 L980.0 587.0 L977.0 647.0 L820.0 547.5 Z" fill="#ababab" filter="url(#b1_5)"/>
<path d="M882.5 492.5 L900.0 470.0 L920.0 460.0 L910.0 505.0 L895.0 525.0 Z" fill="#707070" filter="url(#b4)"/>
<path d="M900.0 470.0 L1000.0 440.0 L1090.0 490.0 L1050.0 530.0 L980.0 585.0 L900.0 530.0 Z" fill="#9a9a9a" filter="url(#b8)"/>
<path d="M1053.0 527.0 L1100.0 490.0 L1107.0 537.0 L1080.0 597.0 L1013.0 637.0 L983.0 647.0 L977.0 590.0 Z" fill="#7e7e7e" filter="url(#b1_5)"/>
<path d="M957.0 663.0 L987.0 643.0 L993.0 680.0 L967.0 697.0 Z" fill="#787878" filter="url(#b4)"/>
<path d="M1110.0 485.0 L1155.0 505.0 L1210.0 512.5 L1290.0 557.0 L1287.0 607.0 L1257.0 627.0 L1107.0 543.0 Z" fill="#acacac" filter="url(#b1_5)"/>
<path d="M1293.0 557.0 L1347.0 503.0 L1387.0 487.0 L1380.0 517.0 L1347.0 563.0 L1313.0 583.0 L1290.0 607.0 Z" fill="#747474" filter="url(#b1_5)"/>
<path d="M1120.0 420.0 L1180.0 395.0 L1290.0 440.0 L1385.0 485.0 L1345.0 503.0 L1293.0 555.0 L1210.0 512.0 L1112.0 488.0 Z" fill="#a7a7a7" filter="url(#b4)"/>
<path d="M1390.0 487.0 L1473.0 527.0 L1467.0 550.0 L1383.0 510.0 Z" fill="#b6b6b6" filter="url(#b1_5)"/>
<path d="M400.0 650.0 L450.0 610.0 L467.0 620.0 L413.0 677.0 Z" fill="#888888" filter="url(#b1_5)"/>
<path d="M693.0 600.0 L743.0 600.0 L733.0 640.0 L713.0 650.0 L700.0 633.0 Z" fill="#888888" filter="url(#b1_5)"/>
<path d="M980.0 600.0 L1033.0 600.0 L987.0 650.0 L960.0 680.0 Z" fill="#808080" filter="url(#b1_5)"/>
<path d="M476.7 775.0 L507.0 757.0 L520.0 780.0 L523.0 830.0 L460.0 900.0 L450.0 906.7 L433.0 853.0 Z" fill="#8a8a8a" filter="url(#b1_5)"/>
<path d="M587.0 707.0 L633.0 667.0 L673.0 640.0 L700.0 650.0 L767.0 710.0 L787.0 753.0 L750.0 787.0 L700.0 817.0 L683.0 860.0 L673.0 900.0 L653.0 920.0 L617.0 887.0 L580.0 833.0 L543.0 787.0 L533.0 757.0 Z" fill="#7c7c7c" filter="url(#b9)"/>
<path d="M633.0 680.0 L660.0 773.0 L667.0 840.0 L647.0 813.0 L633.0 740.0 Z" fill="#585858" filter="url(#b5)"/>
<path d="M600.0 720.0 L640.0 700.0 L650.0 790.0 L620.0 800.0 Z" fill="#6e6e6e" filter="url(#b8)"/>
<path d="M627.0 667.0 L677.0 633.0 L710.0 653.0 L743.0 713.0 L760.0 760.0 L690.0 740.0 Z" fill="#828282" filter="url(#b8)"/>
<path d="M860.0 780.0 L900.0 747.0 L903.0 757.0 L867.0 793.0 Z" fill="#6c6c6c" filter="url(#b3)"/>
<path d="M1013.0 820.0 L1033.0 827.0 L1047.0 893.0 L1027.0 887.0 L1017.0 853.0 Z" fill="#606060" filter="url(#b4)"/>
<path d="M887.0 813.0 L950.0 773.0 L967.0 800.0 L920.0 867.0 L893.0 853.0 Z" fill="#868686" filter="url(#b8)"/>
<path d="M455.0 770.0 L530.0 830.0 L650.0 930.0 L700.0 970.0 L600.0 1010.0 L455.0 905.0 Z" fill="#b0b0b0" filter="url(#b8)"/>
<path d="M705.0 970.0 L837.0 818.0 L1000.0 947.0 L877.0 1095.0 Z" fill="#b1b1b1" filter="url(#b7)"/>
<path d="M880.0 1105.0 L965.0 1160.0 L895.0 1268.0 L805.0 1198.0 Z" fill="#b0b0b0" filter="url(#b6)"/>
<path d="M1110.0 700.0 L1215.0 690.0 L1210.0 800.0 L1130.0 830.0 L1090.0 780.0 Z" fill="#b4b4b4" filter="url(#b8)"/>
<path d="M1040.0 660.0 L1280.0 640.0 L1340.0 700.0 L1200.0 880.0 L1060.0 820.0 Z" fill="#aeaeae" filter="url(#b12)"/>
<path d="M867.0 1097.0 L877.0 1100.0 L813.0 1190.0 L797.0 1180.0 Z" fill="#7e7e7e" filter="url(#b1_5)"/>
<path d="M640.0 1040.0 L700.0 1030.0 L760.0 1080.0 L720.0 1110.0 L660.0 1090.0 Z" fill="#8a8a8a" filter="url(#b8)"/>
<path d="M1000.0 1000.0 L1060.0 960.0 L1090.0 1010.0 L1040.0 1080.0 L1000.0 1060.0 Z" fill="#8c8c8c" filter="url(#b8)"/>
<path d="M753.0 1027.0 L867.0 1093.0 L870.0 1113.0 L787.0 1062.0 Z" fill="#838383" filter="url(#b2)"/>
<path d="M940.0 883.0 L1017.0 927.0 L1007.0 947.0 L933.0 900.0 Z" fill="#b0b0b0" filter="url(#b1_5)"/>
<path d="M1017.0 930.0 L1108.0 1000.0 L1106.0 1010.0 L1007.0 947.0 Z" fill="#8a8a8a" filter="url(#b1_5)"/>
<path d="M887.0 830.0 L987.0 813.0 L1040.0 847.0 L1047.0 903.0 L967.0 873.0 L913.0 867.0 Z" fill="#868686" filter="url(#b7)"/>
<path d="M1025.0 838.0 L1038.0 850.0 L1050.0 900.0 L1040.0 905.0 L1030.0 870.0 Z" fill="#5c5c5c" filter="url(#b3)"/>
<path d="M627.0 1033.0 L693.0 1007.0 L787.0 1047.0 L753.0 1073.0 L727.0 1107.0 L653.0 1073.0 Z" fill="#8a8a8a" filter="url(#b7)"/>
<path d="M700.0 1020.0 L760.0 1045.0 L740.0 1075.0 L705.0 1060.0 Z" fill="#787878" filter="url(#b5)"/>
<path d="M960.0 1013.0 L1007.0 993.0 L1020.0 1047.0 L1007.0 1127.0 L967.0 1080.0 Z" fill="#8a8a8a" filter="url(#b7)"/>
<path d="M1385.0 621.0 L1380.0 662.0 L1367.5 682.0 L1352.5 673.0 L1361.0 652.0 L1375.0 632.0 Z" fill="#3a3a3a" filter="url(#b1)"/>
<path d="M280.0 743.7 L287.5 741.0 L291.0 745.0 L298.7 731.0 L307.5 738.7 L320.0 753.7 L308.7 762.5 L290.0 771.0 Z" fill="#3d3d3d" filter="url(#b1)"/>
<g transform="rotate(-28 800 650)"><rect x="-200" y="-300" width="2200" height="2000" filter="url(#nzl)" opacity="0.12"/><rect x="-200" y="-300" width="2200" height="2000" filter="url(#nzd)" opacity="0.10"/></g>
<path d="M370.0 415.0 L430.0 380.0 L480.0 333.0 L487.0 336.0 L517.5 362.0 L525.0 380.0 L475.0 412.5 L430.0 447.5 L417.5 460.0 L405.0 437.5 Z" fill="url(#stripes)" opacity="0.70" filter="url(#sb)"/>
<path d="M506.0 294.0 L514.0 303.0 L526.0 378.0 L519.0 386.0 L509.0 340.0 L504.0 310.0 Z" fill="url(#stripes)" opacity="0.70" filter="url(#sb)"/>
<path d="M587.0 140.0 L600.0 133.0 L642.0 152.0 L645.0 162.0 L605.0 185.0 L587.0 200.0 Z" fill="url(#stripes)" opacity="0.70" filter="url(#sb)"/>
<path d="M645.0 147.0 L692.0 122.0 L708.0 134.0 L730.0 190.0 L712.0 172.0 L690.0 185.0 L672.0 175.0 L645.0 162.0 Z" fill="url(#stripes)" opacity="0.70" filter="url(#sb)"/>
<path d="M520.0 312.0 L555.0 322.0 L617.0 355.0 L625.0 422.0 L595.0 427.5 L530.0 382.0 Z" fill="url(#stripes)" opacity="0.70" filter="url(#sb)"/>
<path d="M615.0 355.0 L700.0 345.0 L787.0 282.0 L792.5 362.5 L700.0 437.5 L670.0 430.0 L660.0 415.0 L625.0 422.5 Z" fill="url(#stripes)" opacity="0.70" filter="url(#sb)"/>
<path d="M710.0 132.0 L770.0 152.0 L775.0 162.0 L730.0 150.0 L715.0 152.0 Z" fill="url(#stripes)" opacity="0.70" filter="url(#sb)"/>
<path d="M777.0 147.0 L827.0 117.0 L830.0 135.0 L815.0 162.0 L785.0 160.0 Z" fill="url(#stripes)" opacity="0.70" filter="url(#sb)"/>
<path d="M915.0 132.0 L943.0 113.0 L952.0 133.0 L960.0 160.0 L968.0 192.0 L975.0 205.0 L962.0 205.0 L947.0 187.0 L933.0 160.0 Z" fill="url(#stripes)" opacity="0.70" filter="url(#sb)"/>
<path d="M795.0 330.0 L877.0 330.0 L877.0 405.0 L797.5 365.0 Z" fill="url(#stripes)" opacity="0.70" filter="url(#sb)"/>
<path d="M792.5 287.5 L852.5 275.0 L877.5 300.0 L900.0 370.0 L890.0 400.0 L792.5 360.0 Z" fill="url(#stripes)" opacity="0.70" filter="url(#sb)"/>
<path d="M852.5 275.0 L1015.0 260.0 L1060.0 252.5 L1060.0 330.0 L985.0 367.5 L935.0 370.0 L910.0 380.0 L900.0 370.0 L877.5 300.0 Z" fill="url(#stripes)" opacity="0.70" filter="url(#sb)"/>
<path d="M1062.5 257.5 L1237.5 325.0 L1225.0 370.0 L1202.5 405.0 L1170.0 390.0 L1060.0 332.5 Z" fill="url(#stripes)" opacity="0.70" filter="url(#sb)"/>
<path d="M1240.0 325.0 L1282.5 295.0 L1267.5 380.0 L1257.5 385.0 L1227.5 370.0 Z" fill="url(#stripes)" opacity="0.70" filter="url(#sb)"/>
<path d="M760.0 267.5 L787.5 282.5 L792.5 360.0 L792.0 415.0 L760.0 430.0 Z" fill="url(#stripes)" opacity="0.70" filter="url(#sb)"/>
<path d="M125.0 610.0 L145.0 590.0 L175.0 572.5 L195.0 570.0 L212.5 555.0 L237.5 615.0 L205.0 647.5 L170.0 680.0 L161.0 682.5 L147.5 655.0 Z" fill="url(#stripes)" opacity="0.70" filter="url(#sb)"/>
<path d="M215.0 557.5 L290.0 600.0 L301.0 596.0 L355.0 665.0 L365.0 676.0 L342.5 692.5 L237.5 615.0 Z" fill="url(#stripes)" opacity="0.70" filter="url(#sb)"/>
<path d="M470.0 550.0 L500.0 507.5 L510.0 503.0 L525.0 570.0 L475.0 605.0 L460.0 612.0 L430.0 647.5 L400.0 657.5 L450.0 595.0 Z" fill="url(#stripes)" opacity="0.70" filter="url(#sb)"/>
<path d="M510.0 502.5 L682.5 582.5 L690.0 630.0 L667.5 615.0 L525.0 570.0 Z" fill="url(#stripes)" opacity="0.70" filter="url(#sb)"/>
<path d="M685.0 582.5 L810.0 475.0 L815.0 547.5 L710.0 635.0 L690.0 630.0 Z" fill="url(#stripes)" opacity="0.70" filter="url(#sb)"/>
<path d="M817.5 475.0 L877.0 505.0 L980.0 587.0 L977.0 647.0 L820.0 547.5 Z" fill="url(#stripes)" opacity="0.70" filter="url(#sb)"/>
<path d="M1053.0 527.0 L1100.0 490.0 L1107.0 537.0 L1080.0 597.0 L1013.0 637.0 L983.0 647.0 L977.0 590.0 Z" fill="url(#stripes)" opacity="0.70" filter="url(#sb)"/>
<path d="M1110.0 485.0 L1155.0 505.0 L1210.0 512.5 L1290.0 557.0 L1287.0 607.0 L1257.0 627.0 L1107.0 543.0 Z" fill="url(#stripes)" opacity="0.70" filter="url(#sb)"/>
<path d="M1293.0 557.0 L1347.0 503.0 L1387.0 487.0 L1380.0 517.0 L1347.0 563.0 L1313.0 583.0 L1290.0 607.0 Z" fill="url(#stripes)" opacity="0.70" filter="url(#sb)"/>
<path d="M1390.0 487.0 L1473.0 527.0 L1467.0 550.0 L1383.0 510.0 Z" fill="url(#stripes)" opacity="0.70" filter="url(#sb)"/>
<path d="M400.0 650.0 L450.0 610.0 L467.0 620.0 L413.0 677.0 Z" fill="url(#stripes)" opacity="0.70" filter="url(#sb)"/>
<path d="M693.0 600.0 L743.0 600.0 L733.0 640.0 L713.0 650.0 L700.0 633.0 Z" fill="url(#stripes)" opacity="0.70" filter="url(#sb)"/>
<path d="M980.0 600.0 L1033.0 600.0 L987.0 650.0 L960.0 680.0 Z" fill="url(#stripes)" opacity="0.70" filter="url(#sb)"/>
<path d="M476.7 775.0 L507.0 757.0 L520.0 780.0 L523.0 830.0 L460.0 900.0 L450.0 906.7 L433.0 853.0 Z" fill="url(#stripes)" opacity="0.70" filter="url(#sb)"/>
<path d="M867.0 1097.0 L877.0 1100.0 L813.0 1190.0 L797.0 1180.0 Z" fill="url(#stripes)" opacity="0.40" filter="url(#sb)"/>
<path d="M993.0 373.0 L1013.0 393.0 L1080.0 443.0 L1100.0 473.0" fill="none" stroke="#4a4a4a" stroke-width="1.2" stroke-linecap="round" stroke-linejoin="round"/>
<path d="M1227.0 367.0 L1247.0 387.0 L1300.0 413.0 L1363.0 463.0 L1387.0 483.0" fill="none" stroke="#4a4a4a" stroke-width="1.2" stroke-linecap="round" stroke-linejoin="round"/>
<path d="M817.0 477.0 L980.0 587.0" fill="none" stroke="#bdbdbd" stroke-width="1.3" stroke-linecap="round" stroke-linejoin="round"/>
<path d="M1110.0 490.0 L1290.0 557.0" fill="none" stroke="#bdbdbd" stroke-width="1.2" stroke-linecap="round" stroke-linejoin="round"/>
<path d="M1383.0 510.0 L1467.0 550.0" fill="none" stroke="#bdbdbd" stroke-width="1.2" stroke-linecap="round" stroke-linejoin="round"/>
<path d="M510.0 502.5 L682.5 582.5" fill="none" stroke="#bdbdbd" stroke-width="1.2" stroke-linecap="round" stroke-linejoin="round"/>
<path d="M527.0 500.0 L670.0 597.0" fill="none" stroke="#bababa" stroke-width="1.0" stroke-linecap="round" stroke-linejoin="round"/>
<path d="M645.0 162.0 L690.0 185.0 L712.0 172.0" fill="none" stroke="#4a4a4a" stroke-width="1.0" stroke-linecap="round" stroke-linejoin="round"/>
<path d="M587.0 200.0 L605.0 185.0 L645.0 162.0" fill="none" stroke="#8a8a8a" stroke-width="1.0" stroke-linecap="round" stroke-linejoin="round"/>
<path d="M520.0 312.0 L555.0 322.0 L617.0 355.0 L700.0 345.0 L787.0 282.0" fill="none" stroke="#7a7a7a" stroke-width="1.2" stroke-linecap="round" stroke-linejoin="round"/>
<path d="M852.5 275.0 L1015.0 260.0 L1060.0 252.5" fill="none" stroke="#6a6a6a" stroke-width="1.1" stroke-linecap="round" stroke-linejoin="round"/>
<path d="M1062.5 257.5 L1237.5 325.0" fill="none" stroke="#7a7a7a" stroke-width="1.1" stroke-linecap="round" stroke-linejoin="round"/>
<path d="M405.0 437.5 L417.5 460.0 L430.0 480.0 L445.0 502.0 L497.0 507.0" fill="none" stroke="#5a5a5a" stroke-width="1.2" stroke-linecap="round" stroke-linejoin="round"/>
<path d="M685.0 582.5 L810.0 475.0" fill="none" stroke="#6e6e6e" stroke-width="1.1" stroke-linecap="round" stroke-linejoin="round"/>
<path d="M430.0 647.5 L475.0 605.0 L525.0 570.0" fill="none" stroke="#7a7a7a" stroke-width="1.0" stroke-linecap="round" stroke-linejoin="round"/>
<path d="M913.0 133.0 L933.0 160.0 L947.0 187.0 L962.0 205.0" fill="none" stroke="#4a4a4a" stroke-width="1.1" stroke-linecap="round" stroke-linejoin="round"/>
<path d="M1053.0 527.0 L1100.0 490.0" fill="none" stroke="#666666" stroke-width="1.1" stroke-linecap="round" stroke-linejoin="round"/>
<path d="M1293.0 557.0 L1347.0 503.0 L1387.0 487.0" fill="none" stroke="#5c5c5c" stroke-width="1.2" stroke-linecap="round" stroke-linejoin="round"/>
<path d="M780.0 457.0 L810.0 473.0 L817.0 477.0" fill="none" stroke="#666666" stroke-width="1.0" stroke-linecap="round" stroke-linejoin="round"/>
<path d="M237.5 615.0 L342.5 692.5" fill="none" stroke="#bdbdbd" stroke-width="1.0" stroke-linecap="round" stroke-linejoin="round"/>
<path d="M440.0 853.0 L483.0 773.0 L507.0 757.0" fill="none" stroke="#7a7a7a" stroke-width="1.0" stroke-linecap="round" stroke-linejoin="round"/>
<path d="M520.0 830.0 L580.0 867.0 L653.0 927.0 L700.0 970.0" fill="none" stroke="#b8b8b8" stroke-width="1.2" stroke-linecap="round" stroke-linejoin="round"/>
<path d="M837.0 813.0 L700.0 970.0" fill="none" stroke="#8a8a8a" stroke-width="1.3" stroke-linecap="round" stroke-linejoin="round"/>
<path d="M700.0 970.0 L753.0 1027.0 L873.0 1093.0" fill="none" stroke="#b8b8b8" stroke-width="1.3" stroke-linecap="round" stroke-linejoin="round"/>
<path d="M877.0 1100.0 L967.0 1157.0" fill="none" stroke="#b8b8b8" stroke-width="1.2" stroke-linecap="round" stroke-linejoin="round"/>
<path d="M880.0 1117.0 L953.0 1180.0" fill="none" stroke="#bababa" stroke-width="1.0" stroke-linecap="round" stroke-linejoin="round"/>
<path d="M1003.0 947.0 L877.0 1100.0" fill="none" stroke="#8c8c8c" stroke-width="1.2" stroke-linecap="round" stroke-linejoin="round"/>
<path d="M933.0 900.0 L1007.0 947.0" fill="none" stroke="#6e6e6e" stroke-width="1.3" stroke-linecap="round" stroke-linejoin="round"/>
<path d="M1020.0 930.0 L1110.0 1002.0" fill="none" stroke="#4e4e4e" stroke-width="1.3" stroke-linecap="round" stroke-linejoin="round"/>
<path d="M673.0 847.0 L693.0 823.0 L727.0 813.0 L787.0 823.0 L820.0 813.0" fill="none" stroke="#bcbcbc" stroke-width="3.0" stroke-linecap="round" stroke-linejoin="round"/>
<path d="M676.0 852.0 L697.0 829.0 L727.0 820.0 L787.0 830.0 L822.0 820.0" fill="none" stroke="#7e7e7e" stroke-width="2.0" stroke-linecap="round" stroke-linejoin="round"/>
</g>
<path d="M63.7 568.7 C63.7 568.7 79.1 553.6 85.0 547.5 C90.9 541.4 100.0 529.8 105.0 526.0 C110.0 522.2 116.3 522.9 120.0 521.0 C123.7 519.1 127.6 514.6 131.0 512.5 C134.4 510.4 143.7 506.0 143.7 506.0 C143.7 506.0 151.2 511.1 155.0 512.5 C158.8 513.9 165.4 513.5 170.0 516.0 C174.6 518.5 182.9 526.0 187.5 530.0 C192.1 534.0 202.5 543.7 202.5 543.7 C202.5 543.7 214.6 533.4 220.0 530.0 C225.4 526.6 233.6 523.9 240.0 520.0 C246.4 516.1 257.9 509.3 265.0 502.5 C272.1 495.7 282.5 480.7 290.0 472.5 C297.5 464.3 317.5 445.0 317.5 445.0 C317.5 445.0 313.0 419.3 311.0 410.0 C309.0 400.7 303.7 380.0 303.7 380.0 C303.7 380.0 326.6 365.1 335.0 358.7 C343.4 352.3 356.8 340.9 362.5 335.0 C368.2 329.1 371.6 321.1 375.0 317.5 C378.4 313.9 386.0 310.0 386.0 310.0 C386.0 310.0 393.7 313.7 393.7 313.7 C393.7 313.7 398.7 303.4 400.0 297.5 C401.3 291.6 400.7 278.9 402.5 272.5 C404.3 266.1 409.6 259.3 412.5 252.5 C415.4 245.7 419.5 230.1 422.5 225.0 C425.5 219.9 433.7 217.0 433.7 217.0 C433.7 217.0 444.1 224.9 450.0 230.0 C455.9 235.1 469.3 245.7 475.0 252.5 C480.7 259.3 485.6 271.6 490.0 277.5 C494.4 283.4 506.0 293.7 506.0 293.7 C506.0 293.7 523.7 281.2 530.0 275.0 C536.3 268.8 544.6 256.3 550.0 250.0 C555.4 243.7 563.6 234.2 567.5 231.0 C571.4 227.8 575.0 230.5 577.5 227.5 C580.0 224.5 584.1 218.6 585.0 210.0 C585.9 201.4 582.3 177.9 583.7 167.5 C585.1 157.1 591.2 143.2 595.0 137.5 C598.8 131.8 604.6 129.1 610.0 127.5 C615.4 125.9 626.4 124.8 632.5 126.0 C638.6 127.2 647.1 133.9 652.5 136.0 C657.9 138.1 670.0 141.0 670.0 141.0 C670.0 141.0 678.9 130.2 682.5 127.5 C686.1 124.8 695.0 122.0 695.0 122.0 C695.0 122.0 707.5 132.5 707.5 132.5 C707.5 132.5 704.8 126.6 708.7 122.5 C712.6 118.4 729.1 108.7 735.0 103.7 C740.9 98.7 745.7 91.9 750.0 87.5 C754.3 83.1 765.0 73.0 765.0 73.0 C765.0 73.0 778.6 83.1 785.0 87.5 C791.4 91.9 803.8 99.6 810.0 103.7 C816.2 107.8 825.7 113.0 828.7 116.0 C831.7 119.0 828.3 120.7 831.0 125.0 C833.7 129.3 842.6 141.0 847.5 146.0 C852.4 151.0 860.7 157.9 865.0 160.0 C869.3 162.1 877.5 161.0 877.5 161.0 C877.5 161.0 879.6 147.3 881.0 142.5 C882.4 137.7 883.4 131.4 887.5 127.5 C891.6 123.6 903.2 117.9 910.0 115.5 C916.8 113.1 930.2 111.1 935.0 111.0 C939.8 110.9 941.2 111.9 943.7 115.0 C946.2 118.1 950.2 126.4 952.5 132.5 C954.8 138.6 957.9 149.3 960.0 157.5 C962.1 165.7 964.3 181.8 967.5 190.0 C970.7 198.2 978.6 209.5 982.5 215.0 C986.4 220.5 991.4 226.8 995.0 228.7 C998.6 230.6 1003.6 226.4 1007.5 228.0 C1011.4 229.6 1017.9 236.9 1022.5 240.0 C1027.1 243.1 1034.6 248.8 1040.0 250.0 C1045.4 251.2 1060.0 248.5 1060.0 248.5 C1060.0 248.5 1063.7 270.0 1063.7 270.0 C1063.7 270.0 1068.7 251.5 1068.7 251.5 C1068.7 251.5 1078.0 252.8 1081.0 251.0 C1084.0 249.2 1090.0 238.7 1090.0 238.7 C1090.0 238.7 1100.0 241.5 1100.0 241.5 C1100.0 241.5 1108.8 222.3 1112.5 215.0 C1116.2 207.7 1126.0 190.5 1126.0 190.5 C1126.0 190.5 1141.6 195.6 1147.5 200.0 C1153.4 204.4 1161.4 216.4 1167.5 221.0 C1173.6 225.6 1183.2 229.3 1190.0 232.5 C1196.8 235.7 1210.0 239.8 1215.0 243.7 C1220.0 247.6 1222.3 254.8 1225.0 260.0 C1227.7 265.2 1230.1 275.4 1233.7 280.0 C1237.3 284.6 1244.1 291.3 1250.0 292.5 C1255.9 293.7 1270.4 288.5 1275.0 288.7 C1279.6 288.9 1282.5 293.7 1282.5 293.7 C1282.5 293.7 1277.4 317.7 1275.0 330.0 C1272.6 342.3 1266.0 380.0 1266.0 380.0 C1266.0 380.0 1283.0 388.0 1290.0 390.0 C1297.0 392.0 1304.3 390.1 1315.0 393.7 C1325.7 397.3 1352.5 409.5 1365.0 415.0 C1377.5 420.5 1393.6 428.2 1402.5 432.5 C1411.4 436.8 1427.5 445.0 1427.5 445.0 C1427.5 445.0 1447.5 420.5 1447.5 420.5 C1447.5 420.5 1463.6 423.5 1470.0 425.0 C1476.4 426.5 1488.1 429.2 1492.5 431.0 C1496.9 432.8 1498.9 434.1 1501.0 437.5 C1503.1 440.9 1504.8 450.9 1507.5 455.0 C1510.2 459.1 1515.7 464.8 1520.0 466.0 C1524.3 467.2 1537.5 463.7 1537.5 463.7 C1537.5 463.7 1520.0 477.3 1515.0 482.5 C1510.0 487.7 1506.4 493.9 1502.5 500.0 C1498.6 506.1 1491.4 517.5 1487.5 525.0 C1483.6 532.5 1478.2 546.8 1475.0 552.5 C1471.8 558.2 1469.3 560.0 1465.0 565.0 C1460.7 570.0 1450.7 581.1 1445.0 587.5 C1439.3 593.9 1431.4 602.5 1425.0 610.0 C1418.6 617.5 1406.8 631.8 1400.0 640.0 C1393.2 648.2 1382.1 661.8 1377.5 667.5 C1372.9 673.2 1367.5 680.0 1367.5 680.0 C1367.5 680.0 1351.0 672.5 1351.0 672.5 C1351.0 672.5 1349.8 672.1 1347.5 676.0 C1345.2 679.9 1338.6 694.1 1335.0 700.0 C1331.4 705.9 1325.7 713.2 1322.5 717.5 C1319.3 721.8 1315.6 726.4 1312.5 730.0 C1309.4 733.6 1303.6 739.5 1301.0 742.5 C1298.4 745.5 1297.0 747.4 1294.0 751.0 C1291.0 754.6 1283.9 762.4 1280.0 768.0 C1276.1 773.6 1270.8 782.6 1267.0 790.0 C1263.2 797.4 1257.4 812.5 1253.5 820.0 C1249.6 827.5 1244.1 836.1 1240.0 842.5 C1235.9 848.9 1230.0 858.2 1225.0 865.0 C1220.0 871.8 1211.4 881.8 1205.0 890.0 C1198.6 898.2 1187.1 913.6 1180.0 922.5 C1172.9 931.4 1162.1 943.9 1155.0 952.5 C1147.9 961.1 1135.7 975.4 1130.0 982.5 C1124.3 989.6 1117.9 998.4 1115.0 1002.5 C1112.1 1006.6 1110.0 1011.0 1110.0 1011.0 C1110.0 1011.0 1103.7 1006.0 1103.7 1006.0 C1103.7 1006.0 1102.7 1007.9 1100.0 1012.0 C1097.3 1016.1 1090.4 1027.0 1085.0 1034.5 C1079.6 1042.0 1068.9 1056.3 1062.5 1064.5 C1056.1 1072.7 1046.1 1084.5 1040.0 1092.0 C1033.9 1099.5 1025.7 1110.9 1020.0 1117.0 C1014.3 1123.1 1005.0 1129.9 1000.0 1134.5 C995.0 1139.1 988.9 1145.2 985.0 1149.5 C981.1 1153.8 974.6 1159.9 972.5 1164.5 C970.4 1169.1 973.2 1175.9 970.0 1182.0 C966.8 1188.1 955.4 1200.2 950.0 1207.0 C944.6 1213.8 937.9 1222.7 932.5 1229.5 C927.1 1236.3 918.2 1247.7 912.5 1254.5 C906.8 1261.3 892.5 1277.0 892.5 1277.0 C892.5 1277.0 881.1 1269.1 875.0 1264.5 C868.9 1259.9 857.1 1250.6 850.0 1244.5 C842.9 1238.4 832.1 1228.1 825.0 1222.0 C817.9 1215.9 804.1 1207.0 800.0 1202.0 C795.9 1197.0 797.1 1190.0 796.0 1187.0 C794.9 1184.0 795.5 1183.6 792.5 1180.7 C789.5 1177.8 781.1 1171.8 775.0 1167.0 C768.9 1162.2 757.1 1152.7 750.0 1147.0 C742.9 1141.3 730.4 1130.6 725.0 1127.0 C719.6 1123.4 716.8 1124.9 712.5 1122.0 C708.2 1119.1 700.4 1110.8 695.0 1107.0 C689.6 1103.2 679.3 1097.3 675.0 1095.7 C670.7 1094.1 669.6 1098.4 665.0 1095.7 C660.4 1093.0 648.9 1082.5 642.5 1077.0 C636.1 1071.5 626.1 1062.7 620.0 1057.0 C613.9 1051.3 606.4 1043.4 600.0 1037.0 C593.6 1030.6 585.7 1022.1 575.0 1012.5 C564.3 1002.9 537.5 980.4 525.0 970.0 C512.5 959.6 498.2 948.9 487.5 940.0 C476.8 931.1 456.1 914.3 450.0 907.5 C443.9 900.7 447.1 898.2 445.0 892.5 C442.9 886.8 437.1 872.7 435.0 867.5 C432.9 862.3 432.5 859.2 430.0 856.0 C427.5 852.8 421.8 848.4 417.5 845.0 C413.2 841.6 405.0 837.5 400.0 832.5 C395.0 827.5 387.5 816.6 382.5 810.0 C377.5 803.4 370.4 791.4 365.0 786.0 C359.6 780.6 351.3 776.9 345.0 772.5 C338.7 768.1 321.0 755.0 321.0 755.0 C321.0 755.0 314.3 761.0 310.0 763.7 C305.7 766.4 296.4 773.5 291.0 773.7 C285.6 773.9 278.4 768.4 272.5 765.0 C266.6 761.6 255.4 753.9 250.0 750.0 C244.6 746.1 240.7 741.8 235.0 737.5 C229.3 733.2 217.9 725.7 210.0 720.0 C202.1 714.3 187.0 702.9 180.0 697.5 C173.0 692.1 165.6 688.6 161.0 682.5 C156.4 676.4 151.2 662.1 147.5 655.0 C143.8 647.9 138.2 638.9 135.0 632.5 C131.8 626.1 128.2 614.6 125.0 610.0 C121.8 605.4 116.8 603.6 112.5 600.0 C108.2 596.4 99.6 588.6 95.0 585.0 C90.4 581.4 84.5 577.3 80.0 575.0 C75.5 572.7 63.7 568.7 63.7 568.7 Z" fill="none" stroke="#f7a033" stroke-width="3.1" stroke-linejoin="round"/>
</svg>
</div>
<div id="side">

</div>
<div class="abs box" style="left:1562.5px;top:-12.0px;width:674.0px;height:124.0px;"></div>
<svg class="abs" style="left:1585.0px;top:86.0px" width="13" height="13" viewBox="0 0 13 13"><path d="M0 0 L12.5 6 L0 12 Z" fill="#bcbcbc"/></svg>
<svg class="abs" style="left:1909.0px;top:89.0px" width="24" height="10" viewBox="0 0 24 10"><rect x="0.0" y="0.0" width="2.2" height="2.2" fill="#d0d0d0"/><rect x="6.6" y="0.0" width="2.2" height="2.2" fill="#d0d0d0"/><rect x="13.2" y="0.0" width="2.2" height="2.2" fill="#d0d0d0"/><rect x="19.8" y="0.0" width="2.2" height="2.2" fill="#d0d0d0"/><rect x="0.0" y="7.2" width="2.2" height="2.2" fill="#d0d0d0"/><rect x="6.6" y="7.2" width="2.2" height="2.2" fill="#d0d0d0"/><rect x="13.2" y="7.2" width="2.2" height="2.2" fill="#d0d0d0"/><rect x="19.8" y="7.2" width="2.2" height="2.2" fill="#d0d0d0"/></svg>
<div class="abs btn" style="left:2258.0px;top:-12.0px;width:39.0px;height:52.0px;border-radius:8px;"></div>
<svg class="abs" style="left:2268.0px;top:12.0px" width="20" height="16" viewBox="0 0 20 16"><path d="M1 1.2 L18.6 1.2 L9.8 14.3 Z" fill="#e8e8e8"/></svg>
<div class="abs box" style="left:1562.5px;top:126.7px;width:734.0px;height:1146.3px;"></div>
<div class="abs btn" style="left:1571.0px;top:135.0px;width:236.3px;height:61.5px;border-radius:8px 0 0 8px;"></div>
<div class="abs blue" style="left:1808.3px;top:135.0px;width:238.5px;height:61.5px;box-shadow:0 2px 1px rgba(0,0,0,.25);"></div>
<div class="abs btn" style="left:2047.8px;top:135.0px;width:239.5px;height:61.5px;border-radius:0 8px 8px 0;"></div>
<div class="t c" style="top:151.0px;left:1489.9px;width:400px;">Layer</div>
<div class="t c" style="top:151.0px;left:1727.8px;width:400px;color:#ffffff;">Blending</div>
<div class="t c" style="top:151.0px;left:1968.0px;width:400px;">Modifiers</div>
<div class="abs blue" style="left:1571.0px;top:217.0px;width:630.3px;height:39.0px;border-radius:8px 0 0 8px;box-shadow:0 2px 1px rgba(0,0,0,.25);"></div>
<div class="abs btn" style="left:2202.5px;top:217.0px;width:41.2px;height:39.0px;"></div>
<div class="abs " style="left:2245.0px;top:217.0px;width:42.3px;height:39.0px;background:#444444;border-radius:0 8px 8px 0;box-shadow:0 2px 1px rgba(0,0,0,.25);"></div>
<div class="t" style="top:221.8px;left:1605.0px;">Mix Factor</div>
<div class="t r" style="top:221.8px;right:135.0px;">1.00</div>
<div class="abs " style="left:1571.0px;top:276.0px;width:662.0px;height:253.0px;background:#242424;border:1.5px solid #3b3b3b;border-radius:8px;"></div>
<div class="abs " style="left:1582.0px;top:286.7px;width:639.8px;height:39.1px;background:#48494d;border-radius:6px;"></div>
<div class="t" style="top:291.8px;left:1657.0px;">Texture Mask</div>
<svg class="abs" style="left:1595.0px;top:503.0px" width="13" height="13" viewBox="0 0 13 13"><path d="M0 0 L12.5 6 L0 12 Z" fill="#bcbcbc"/></svg>
<svg class="abs" style="left:1911.0px;top:506.0px" width="24" height="10" viewBox="0 0 24 10"><rect x="0.0" y="0.0" width="2.2" height="2.2" fill="#d0d0d0"/><rect x="6.6" y="0.0" width="2.2" height="2.2" fill="#d0d0d0"/><rect x="13.2" y="0.0" width="2.2" height="2.2" fill="#d0d0d0"/><rect x="19.8" y="0.0" width="2.2" height="2.2" fill="#d0d0d0"/><rect x="0.0" y="7.2" width="2.2" height="2.2" fill="#d0d0d0"/><rect x="6.6" y="7.2" width="2.2" height="2.2" fill="#d0d0d0"/><rect x="13.2" y="7.2" width="2.2" height="2.2" fill="#d0d0d0"/><rect x="19.8" y="7.2" width="2.2" height="2.2" fill="#d0d0d0"/></svg>
<div class="abs dark" style="left:2247.8px;top:276.7px;width:39.5px;height:39.6px;border-radius:8px 8px 0 0;border-bottom:none;"></div>
<div class="abs btn" style="left:2247.8px;top:317.5px;width:39.5px;height:41.5px;border-radius:0 0 8px 8px;"></div>
<div class="abs dark" style="left:2247.8px;top:374.0px;width:39.5px;height:41.0px;border-radius:8px;"></div>
<div class="abs " style="left:2247.8px;top:430.0px;width:39.5px;height:39.5px;background:#434343;border-radius:8px 8px 0 0;"></div>
<div class="abs " style="left:2247.8px;top:470.8px;width:39.5px;height:41.7px;background:#434343;border-radius:0 0 8px 8px;box-shadow:0 2px 1px rgba(0,0,0,.2);"></div>
<div class="abs blue" style="left:1571.0px;top:550.0px;width:672.7px;height:39.0px;border-radius:8px 0 0 8px;box-shadow:0 2px 1px rgba(0,0,0,.25);"></div>
<div class="abs btn" style="left:2245.0px;top:550.0px;width:42.3px;height:39.0px;border-radius:0 8px 8px 0;"></div>
<div class="t" style="top:555.2px;left:1604.5px;">Opacity</div>
<div class="t r" style="top:555.2px;right:91.7px;">1.00</div>
<div class="abs btn" style="left:1571.0px;top:610.0px;width:356.0px;height:39.0px;border-radius:8px 0 0 8px;"></div>
<div class="abs btn" style="left:1928.5px;top:610.0px;width:358.8px;height:39.0px;border-radius:0 8px 8px 0;"></div>
<div class="t c" style="top:615.1px;left:1549.0px;width:400px;">Invert</div>
<div class="t c" style="top:615.1px;left:1908.0px;width:400px;">Add</div>
<div class="t" style="top:704.0px;left:1572.3px;letter-spacing:0.36px;">Texture Type:</div>
<div class="abs field" style="left:1738.3px;top:698.3px;width:505.7px;height:40.7px;border-radius:8px 0 0 8px;border-right:none;"></div>
<div class="abs btn" style="left:2245.0px;top:698.3px;width:42.3px;height:40.7px;border-radius:0 8px 8px 0;"></div>
<div class="t" style="top:704.0px;left:1754.0px;">Checker</div>
<div class="t" style="top:763.5px;left:1571.0px;">Mapping:</div>
<div class="abs field" style="left:1749.0px;top:757.5px;width:538.3px;height:41.5px;"></div>
<div class="t" style="top:763.5px;left:1765.0px;">Position</div>
<div class="abs " style="left:1571.0px;top:846.7px;width:716.3px;height:328.0px;background:#232323;border:1.5px solid #383838;border-radius:8px;"></div>
<div class="t" style="top:863.8px;left:1844.0px;">Texture Settings</div>
<div class="abs " style="left:1853.7px;top:919.0px;width:380.3px;height:39.0px;background:#e7e7e7;border-radius:8px 8px 0 0;"></div>
<div class="abs " style="left:1853.7px;top:960.0px;width:380.3px;height:40.5px;background:#808080;"></div>
<div class="abs btn" style="left:1853.7px;top:1002.5px;width:380.3px;height:42.0px;border-radius:0 0 8px 8px;"></div>
<div class="t r" style="top:924.3px;right:475.5px;letter-spacing:-0.30px;">Color1</div>
<div class="t r" style="top:967.1px;right:475.5px;letter-spacing:-0.30px;">Color2</div>
<div class="t r" style="top:1010.1px;right:474.0px;">Scale</div>
<div class="t c" style="top:1008.8px;left:1843.7px;width:400px;">5.000</div>
<div class="abs " style="left:2252.8px;top:933.8px;width:9.0px;height:9.0px;background:#dcdcdc;border-radius:50%;"></div>
<div class="abs " style="left:2252.8px;top:976.8px;width:9.0px;height:9.0px;background:#dcdcdc;border-radius:50%;"></div>
<div class="abs " style="left:2252.8px;top:1019.7px;width:9.0px;height:9.0px;background:#dcdcdc;border-radius:50%;"></div>
<div class="t" style="top:1069.8px;left:1858.0px;">Remap Values</div>
<div class="t" style="top:1129.4px;left:1881.5px;">Transform</div>
<div class="t" style="top:1228.8px;left:1868.5px;color:#8c8c8c;">Randomize</div>
<svg class="abs" style="left:2196.0px;top:210.0px;overflow:visible" width="100" height="56" viewBox="0 0 100 56"><g fill="none" stroke="#e4e4e4" stroke-width="2.2" stroke-linecap="round">
<path d="M22.2 27.8 L22.2 16.6 A4.6 4.6 0 1 0 17.6 21.2 L18.6 21.2"/>
<path d="M25.8 20.9 L37 20.9 A4.6 4.6 0 1 0 32.4 16.3 L32.4 17.3"/>
<path d="M29.6 32 L17.4 32 A4.6 4.6 0 1 0 22 36.6 L22 35.6"/>
<path d="M33 24.4 L33 36.5 A4.6 4.6 0 1 0 37.6 31.9 L36.6 31.9"/>
</g>
<g fill="none" stroke="#adadad" stroke-width="2.3" stroke-linecap="round" stroke-linejoin="round">
<path d="M56.5 27.6 L84.7 27.6"/><path d="M63.2 21 L56.4 27.6 L63.2 34.2"/><path d="M78 21 L84.8 27.6 L78 34.2"/></g></svg>
<svg class="abs" style="left:1586.1px;top:291.1px;overflow:visible" width="31" height="30.8" viewBox="0 0 31 30.8"><rect x="0" y="0" width="31" height="30.8" rx="1.2" fill="#fbfbfb"/><rect x="9.50" y="2.20" width="6.50" height="6.50" fill="#47484c"/><rect x="22.50" y="2.20" width="6.50" height="6.50" fill="#47484c"/><rect x="3.00" y="8.70" width="6.50" height="6.50" fill="#47484c"/><rect x="16.00" y="8.70" width="6.50" height="6.50" fill="#47484c"/><rect x="9.50" y="15.20" width="6.50" height="6.50" fill="#47484c"/><rect x="22.50" y="15.20" width="6.50" height="6.50" fill="#47484c"/><rect x="3.00" y="21.70" width="6.50" height="6.50" fill="#47484c"/><rect x="16.00" y="21.70" width="6.50" height="6.50" fill="#47484c"/></svg>
<svg class="abs" style="left:2186.6px;top:295.0px;overflow:visible" width="30" height="21" viewBox="0 0 30 21"><path d="M0.5 10.5 C6 2 11 0.5 15 0.5 C19 0.5 24 2 29.5 10.5 C24 19 19 20.5 15 20.5 C11 20.5 6 19 0.5 10.5 Z" fill="#ffffff"/>
<circle cx="15" cy="10.2" r="7.4" fill="#48494d"/><circle cx="15" cy="10.2" r="3.8" fill="#ffffff"/></svg>
<svg class="abs" style="left:2258.7px;top:285.3px;overflow:visible" width="20" height="20" viewBox="0 0 20 20"><path d="M10 0.5 L10 19.5 M0.5 10 L19.5 10" stroke="#e6e6e6" stroke-width="2.2" fill="none"/></svg>
<svg class="abs" style="left:2258.8px;top:335.4px;overflow:visible" width="20" height="4" viewBox="0 0 20 4"><path d="M0.5 1.8 L19.5 1.8" stroke="#e6e6e6" stroke-width="2.2" fill="none"/></svg>
<svg class="abs" style="left:2256.0px;top:389.5px;overflow:visible" width="20" height="12" viewBox="0 0 20 12"><path d="M1.2 1.2 L10 10.5 L18.8 1.2" stroke="#e6e6e6" stroke-width="2.3" fill="none" stroke-linecap="round" stroke-linejoin="round"/></svg>
<svg class="abs" style="left:2257.5px;top:442.0px;overflow:visible" width="20" height="15" viewBox="0 0 20 15"><path d="M10 1 L19 14 L1 14 Z" fill="#6c6c6c"/></svg>
<svg class="abs" style="left:2257.5px;top:484.0px;overflow:visible" width="20" height="15" viewBox="0 0 20 15"><path d="M10 14 L19 1 L1 1 Z" fill="#6c6c6c"/></svg>
<svg class="abs" style="left:2200.0px;top:540.0px;overflow:visible" width="100" height="56" viewBox="0 0 100 56"><g fill="none" stroke="#e6e6e6" stroke-width="2.3" stroke-linecap="butt" stroke-linejoin="miter">
<path d="M51.8 25.2 A15 15 0 0 1 80.4 25.6"/><path d="M80.8 14.4 L80.8 26.2 L69.5 26.2"/>
<path d="M80.8 34.6 A15 15 0 0 1 52.5 33"/><path d="M52.1 44.7 L52.1 32.5 L63.9 32.5"/></g></svg>
<svg class="abs" style="left:2223.1px;top:715.5px;overflow:visible" width="17" height="10" viewBox="0 0 17 10"><path d="M2 1.9 L8.4 8.5 L15 1.7" stroke="#e6e6e6" stroke-width="2.3" fill="none" stroke-linecap="round" stroke-linejoin="round"/></svg>
<svg class="abs" style="left:2266.3px;top:775.5px;overflow:visible" width="17" height="10" viewBox="0 0 17 10"><path d="M2 1.9 L8.4 8.5 L15 1.7" stroke="#e6e6e6" stroke-width="2.3" fill="none" stroke-linecap="round" stroke-linejoin="round"/></svg>
<svg class="abs" style="left:2200.0px;top:690.0px;overflow:visible" width="100" height="56" viewBox="0 0 100 56"><path d="M52 13 L63.3 13 Q64.3 13 64.3 14 L64.3 37.3 A6.65 6.65 0 0 1 51 37.3 L51 14 Q51 13 52 13 Z" fill="#e8e8e8"/><circle cx="57.8" cy="37.1" r="2.1" fill="#545454"/>
<path d="M66.9 20.4 L71.7 15.2 L79.9 22.6 L66.9 34.8 Z" fill="#c4c4c4"/>
<path d="M65.2 43.4 L75.2 30.4 L82.1 30.4 L82.1 43.4 Z" fill="#a4a4a4"/></svg>
<svg class="abs" style="left:1585.3px;top:873.7px;overflow:visible" width="22" height="12" viewBox="0 0 22 12"><path d="M1.2 1.2 L11 10.3 L20.8 1.2" stroke="#e6e6e6" stroke-width="2.3" fill="none" stroke-linecap="round" stroke-linejoin="round"/></svg>
<svg class="abs" style="left:1591.3px;top:1075.3px;overflow:visible" width="14" height="21" viewBox="0 0 14 21"><path d="M1.2 1.2 L11.5 10.3 L1.2 19.4" stroke="#e6e6e6" stroke-width="2.3" fill="none" stroke-linecap="round" stroke-linejoin="round"/></svg>
<svg class="abs" style="left:1591.3px;top:1135.5px;overflow:visible" width="14" height="21" viewBox="0 0 14 21"><path d="M1.2 1.2 L11.5 10.3 L1.2 19.4" stroke="#e6e6e6" stroke-width="2.3" fill="none" stroke-linecap="round" stroke-linejoin="round"/></svg>
<svg class="abs" style="left:1585.7px;top:1234.2px;overflow:visible" width="14" height="21" viewBox="0 0 14 21"><path d="M1.2 1.2 L11.5 10.3 L1.2 19.4" stroke="#8a8a8a" stroke-width="2.3" fill="none" stroke-linecap="round" stroke-linejoin="round"/></svg>
</div>
</body>
</html>
